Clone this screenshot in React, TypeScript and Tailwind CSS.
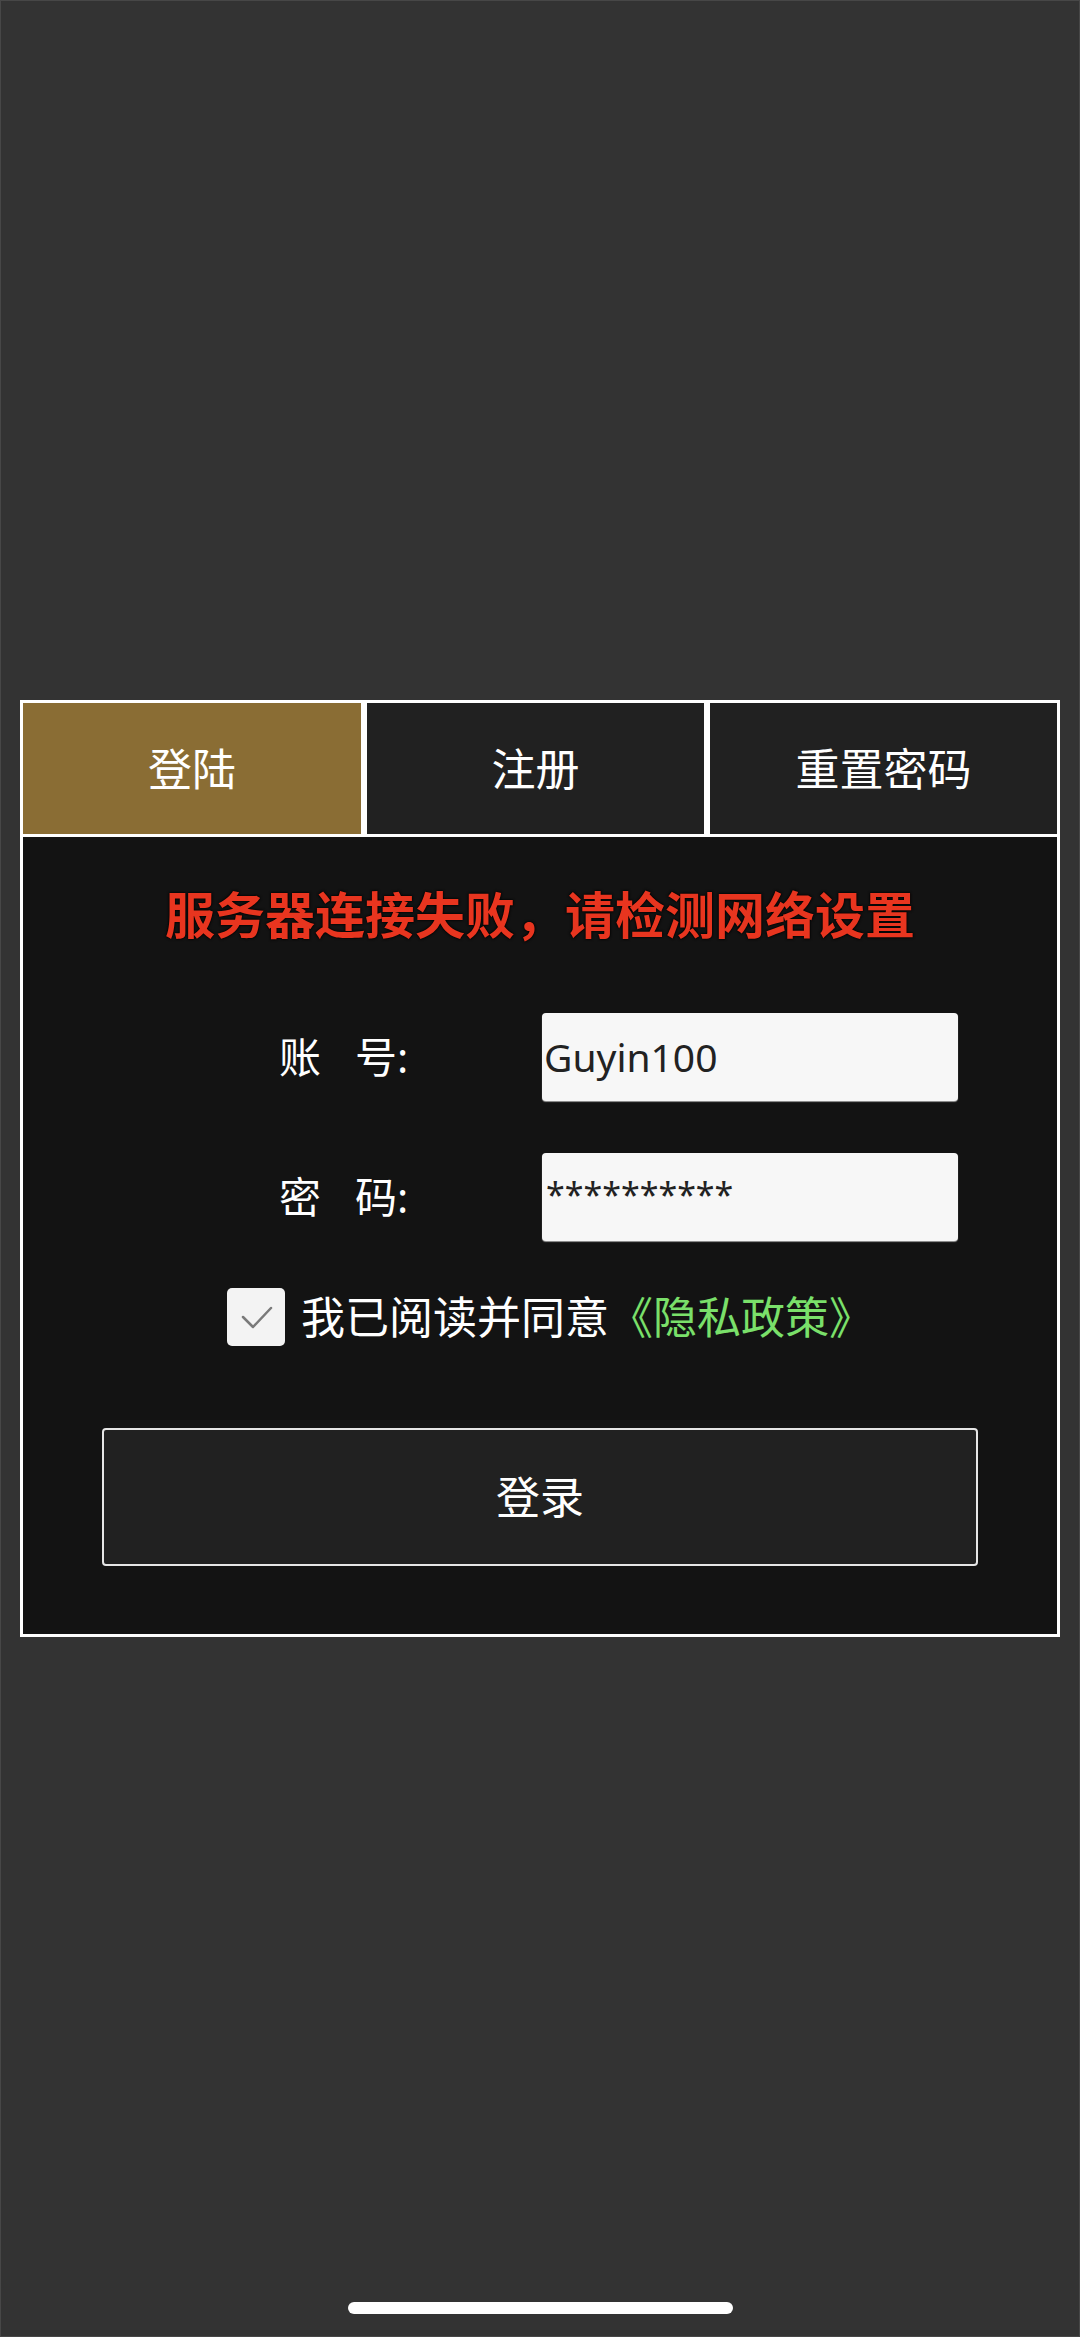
const cjk = "font-['Noto_Sans','Noto_Sans_CJK_SC',sans-serif]"

function Tab({ label, active, width }: { label: string; active?: boolean; width: string }) {
  return (
    <div
      className={`flex h-[131px] items-center justify-center text-[44px] leading-none text-white ${width} ${
        active ? "bg-[#8a6d34]" : "bg-[#212121]"
      }`}
    >
      {label}
    </div>
  )
}

function FieldRow({ first, second, children }: { first: string; second: string; children: React.ReactNode }) {
  return (
    <div className="flex items-center pl-[256px]">
      <div className="flex w-[263px] items-center text-[42px] leading-none text-white">
        <span>{first}</span>
        <span className="ml-[34px]">{second}:</span>
      </div>
      {children}
    </div>
  )
}

export default function App() {
  return (
    <div className={`flex h-[2337px] w-full flex-col border border-[#474747] bg-[#333333] pt-[699px] ${cjk}`}>
      <div className="mx-[19px] border-[3px] border-white">
        {/* tabs */}
        <div className="flex gap-[6px] bg-white pb-[3px]">
          <Tab label="登陆" active width="w-[338px]" />
          <Tab label="注册" width="w-[337px]" />
          <Tab label="重置密码" width="flex-1" />
        </div>

        {/* form */}
        <div className="flex flex-col bg-[#131313] pb-[68px]">
          <div className="flex h-[156px] items-center justify-center text-[50px] font-bold leading-none text-[#e8351f] [text-shadow:0_0_3px_#000,0_0_2px_#000]">
            服务器连接失败，请检测网络设置
          </div>

          <div className="mt-[20px]">
            <FieldRow first="账" second="号">
              <div className="flex h-[88px] w-[416px] items-center rounded-[4px] bg-[#f7f7f7] pl-[2px] text-[39px] text-[#222] shadow-[0_1px_1px_#9a9a9a]">
                Guyin100
              </div>
            </FieldRow>
          </div>

          <div className="mt-[52px]">
            <FieldRow first="密" second="码">
              <div className="h-[88px] w-[416px] rounded-[4px] bg-[#f7f7f7] pl-[4px] pt-[14px] text-[34px] leading-[54px] text-[#222] shadow-[0_1px_1px_#9a9a9a]">
                **********
              </div>
            </FieldRow>
          </div>

          <div className="mt-[47px] flex items-center justify-center gap-[16px] pl-[20px]">
            <div className="flex h-[58px] w-[58px] items-center justify-center rounded-[5px] bg-[#f3f3f3]">
              <svg width="58" height="58" viewBox="0 0 58 58" fill="none">
                <path d="M16 29 L26 39 L44 20" stroke="#7a7a7a" strokeWidth="2.5" strokeLinecap="round" strokeLinejoin="round" />
              </svg>
            </div>
            <div className="text-[44px] leading-none text-white">
              我已阅读并同意<span className="text-[#7ae06a]">《隐私政策》</span>
            </div>
          </div>

          <div className="mx-auto mt-[82px] flex h-[138px] w-[876px] items-center justify-center rounded-[4px] border-2 border-[#e6e6e6] bg-[#212121] text-[44px] leading-none text-white">
            登录
          </div>
        </div>
      </div>

      <div className="flex-1" />
      <div className="mx-auto mb-[22px] h-[12px] w-[385px] rounded-full bg-white" />
    </div>
  )
}
